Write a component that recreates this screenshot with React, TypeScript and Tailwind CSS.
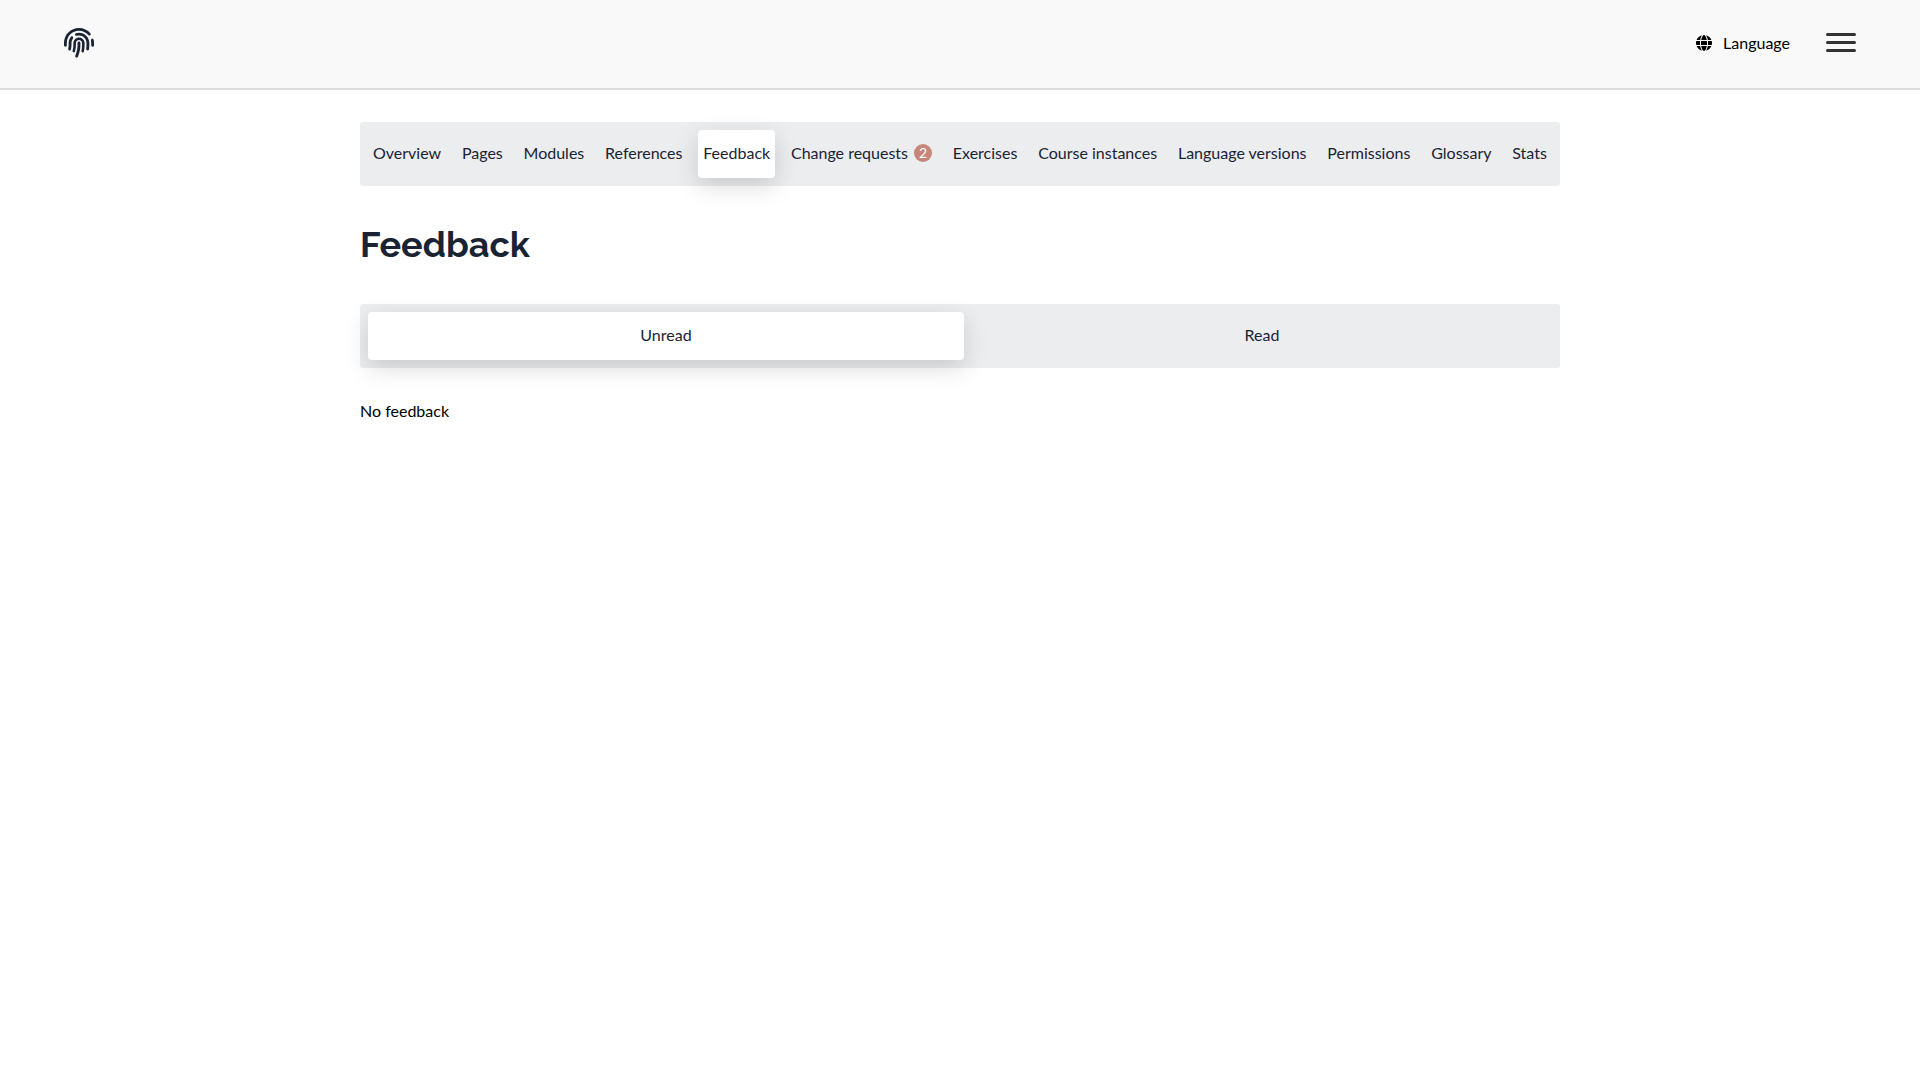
import { FaFingerprint, FaGlobe } from "react-icons/fa6";

const tabs = ["Overview", "Pages", "Modules", "References", "Feedback", "Change requests", "Exercises", "Course instances", "Language versions", "Permissions", "Glossary", "Stats"];

export default function App() {
  return (
    <div className="min-h-screen bg-white font-['Lato',sans-serif] text-base text-black antialiased">
      <header className="flex items-start justify-between border-b-2 border-[#dddddd] bg-[#f9f9f9] px-16 pt-7 pb-[30px]">
        <a href="#home" aria-label="Home" className="text-[#1a2333]">
          <FaFingerprint className="size-[30px]" />
        </a>
        <div className="flex items-center pt-px">
          <button className="mr-9 flex items-center gap-[11px] pt-0.5">
            <FaGlobe className="size-4" />
            Language
          </button>
          <button aria-label="Open menu" className="flex w-[30px] flex-col gap-[5px]">
            <span className="h-[3px] rounded-full bg-[#333]" />
            <span className="h-[3px] rounded-full bg-[#333]" />
            <span className="h-[3px] rounded-full bg-[#333]" />
          </button>
        </div>
      </header>
      <main className="mx-auto max-w-[1200px] pt-8">
        <nav className="flex justify-between rounded-[3px] bg-[#ebedee] p-2 text-[#1a2333]">
          {tabs.map((tab) => (
            <a
              key={tab}
              href="#tab"
              aria-current={tab === "Feedback" ? "page" : undefined}
              className={
                tab === "Feedback"
                  ? "flex items-center rounded bg-white px-[5px] pt-[11px] pb-[13px] shadow-[0_8px_24px_rgba(0,0,0,0.15)]"
                  : "flex items-center px-[5px] pt-[11px] pb-[13px]"
              }
            >
              {tab}
              {tab === "Change requests" && (
                <span className="ml-1.5 flex size-[18px] items-center justify-center rounded-full bg-[#c8857a] text-sm text-white">2</span>
              )}
            </a>
          ))}
        </nav>
        <h1 className="mt-[38px] font-['Raleway','Open_Sans',sans-serif] text-4xl font-bold text-[#1a2333]">Feedback</h1>
        <div className="mt-10 flex rounded-[3px] bg-[#ebedee] py-2 pl-2 text-[#1a2333]">
          <button className="flex-1 rounded bg-white pt-[11px] pb-[13px] shadow-[0_8px_24px_rgba(0,0,0,0.15)]">Unread</button>
          <button className="flex-1 pt-[11px] pb-[13px]">Read</button>
        </div>
        <p className="mt-[31px]">No feedback</p>
      </main>
    </div>
  );
}
